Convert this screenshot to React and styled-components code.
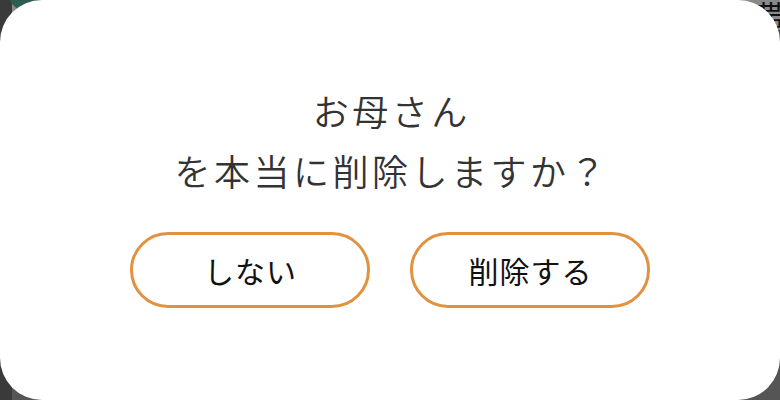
import React from "react";
import styled, { createGlobalStyle } from "styled-components";

const Global = createGlobalStyle`
  html, body { margin: 0; padding: 0; }
  body {
    width: 780px;
    height: 400px;
    overflow: hidden;
    background: #575757;
    font-family: "Noto Sans CJK JP", "Noto Sans", sans-serif;
  }
`;

const Backdrop = styled.div`
  position: relative;
  width: 780px;
  height: 400px;
  overflow: hidden;
  background:
    radial-gradient(circle at 30px -10px, #2e5c52 0, #2e5c52 22px, transparent 23px),
    linear-gradient(90deg, #3a3a3a 0, #3a3a3a 12px, transparent 12px),
    linear-gradient(180deg, #8a8a8a 0, #8a8a8a 30px, transparent 30px),
    #555555;
`;

const BehindGlyph = styled.span`
  position: absolute;
  top: -8px;
  right: -6px;
  font-size: 30px;
  color: #111;
  font-family: "Noto Sans CJK JP", sans-serif;
`;

const Dialog = styled.div`
  position: absolute;
  inset: 0;
  background: #ffffff;
  border-radius: 42px;
  display: flex;
  flex-direction: column;
  align-items: center;
  padding-top: 80px;
  box-sizing: border-box;
`;

const Message = styled.p`
  margin: 0;
  text-align: center;
  color: #333333;
  font-size: 36px;
  font-weight: 350;
  line-height: 60px;
  letter-spacing: 3.5px;
  padding-left: 3.5px;
`;

const Actions = styled.div`
  display: flex;
  gap: 40px;
  margin-top: 32px;
`;

const Button = styled.button`
  width: 240px;
  height: 76px;
  box-sizing: border-box;
  border: 3px solid #e09240;
  border-radius: 38px;
  background: #ffffff;
  color: #111111;
  font-family: "Noto Sans CJK JP", sans-serif;
  font-size: 30px;
  font-weight: 400;
  letter-spacing: 1px;
  display: flex;
  align-items: center;
  justify-content: center;
  padding: 0 0 0 1px;
  cursor: pointer;
`;

export default function App() {
  return (
    <>
      <Global />
      <Backdrop>
        <BehindGlyph>帯</BehindGlyph>
        <Dialog>
          <Message>
            お母さん
            <br />
            を本当に削除しますか？
          </Message>
          <Actions>
            <Button>しない</Button>
            <Button>削除する</Button>
          </Actions>
        </Dialog>
      </Backdrop>
    </>
  );
}
